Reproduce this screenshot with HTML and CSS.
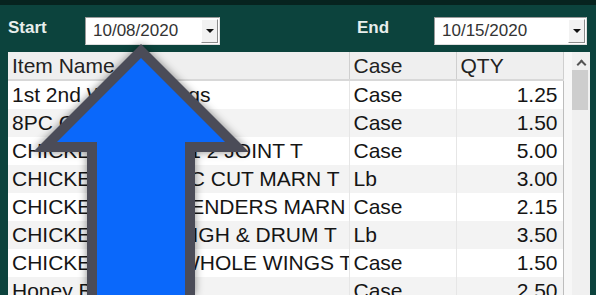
FILE: index.html
```html
<!DOCTYPE html>
<html lang="en">
  <head>
    <meta charset="UTF-8" />
    <title>Usage Report</title>
    <link rel="stylesheet" href="styles.css">
  </head>
  <body>
    <div class="topbar"></div>

    <div class="filters">
      <label class="lbl">Start</label>
      <div class="date date-start">
        <span>10/08/2020</span>
        <span class="drop"><i></i></span>
      </div>
      <label class="lbl lbl-end">End</label>
      <div class="date date-end">
        <span>10/15/2020</span>
        <span class="drop"><i></i></span>
      </div>
    </div>

    <div class="grid-wrap">
      <div class="grid-area">
        <table class="grid">
          <colgroup>
            <col class="c-name" />
            <col class="c-unit" />
            <col class="c-qty" />
          </colgroup>
          <thead>
            <tr><th>Item Name</th><th>Case</th><th>QTY</th></tr>
          </thead>
          <tbody>
            <tr><td>1st 2nd Whole Wings</td><td>Case</td><td class="num">1.25</td></tr>
            <tr><td>8PC Chicken</td><td>Case</td><td class="num">1.50</td></tr>
            <tr><td>CHICKEN WINGS 1 2 JOINT T</td><td>Case</td><td class="num">5.00</td></tr>
            <tr><td>CHICKEN WHL 8PC CUT MARN T</td><td>Lb</td><td class="num">3.00</td></tr>
            <tr><td>CHICKEN BRST. TENDERS MARN</td><td>Case</td><td class="num">2.15</td></tr>
            <tr><td>CHICKEN 8 PC THIGH &amp; DRUM T</td><td>Lb</td><td class="num">3.50</td></tr>
            <tr><td>CHICKEN MARN WHOLE WINGS T</td><td>Case</td><td class="num">1.50</td></tr>
            <tr><td>Honey Butter</td><td>Case</td><td class="num">2.50</td></tr>
          </tbody>
        </table>
      </div>
      <div class="scrollbar">
        <span class="up"></span>
        <span class="thumb"></span>
      </div>
    </div>

    <svg class="pointer" width="596" height="295" viewBox="0 0 596 295">
      <polygon fill="#4b4c58" points="141,44 249,152 195,152 195,300 87,300 87,152 33,152" />
      <polygon fill="#0a68fb" points="141,58 225,142 185,142 185,300 97,300 97,142 57,142" />
    </svg>
  </body>
</html>
```

FILE: styles.css
```css
body {
  margin: 0;
  background-color: #0c433d;
  font-family: "Liberation Sans", Arial, sans-serif;
  overflow: hidden;
}
.topbar {
  height: 5px;
  background-color: #07231f;
}
.filters {
  display: flex;
  align-items: center;
  padding: 12px 0 0 8px;
  height: 28px;
}
.lbl {
  width: 77px;
  color: #e8eeec;
  font-weight: bold;
  font-size: 17px;
  margin-top: -6px;
}
.lbl-end {
  margin-left: 137px;
}
.date {
  box-sizing: border-box;
  height: 28px;
  background: white;
  border: 1px solid #9a9a9a;
  border-right-color: #e0e0e0;
  border-bottom-color: #e0e0e0;
  display: flex;
  align-items: center;
  justify-content: space-between;
  padding: 0 1px 0 7px;
  font-size: 17px;
  color: #333;
}
.date-start {
  width: 135px;
}
.date-end {
  width: 153px;
}
.drop {
  width: 17px;
  height: 24px;
  box-sizing: border-box;
  background: #f2f2f2;
  border: 1px solid #fff;
  border-right-color: #8c8c8c;
  border-bottom-color: #8c8c8c;
  display: flex;
  align-items: center;
  justify-content: center;
}
.drop i {
  width: 0;
  height: 0;
  border-left: 4px solid transparent;
  border-right: 4px solid transparent;
  border-top: 4px solid #111;
}
.grid-wrap {
  display: flex;
  margin: 7px 6px 0 8px;
  height: 260px;
}
.grid-area {
  width: 564px;
  background: #f7f7f7;
  overflow: hidden;
}
.grid {
  border-collapse: collapse;
  table-layout: fixed;
  width: 555px;
  font-size: 21px;
  color: #151515;
}
.c-name {
  width: 341px;
}
.c-unit,
.c-qty {
  width: 107px;
}
.grid th {
  height: 27px;
  padding: 0 4px;
  background: #efefef;
  font-weight: normal;
  text-align: left;
  color: #222;
  border-right: 1px solid #cfcfcf;
  border-bottom: 2px solid #d8d8d8;
  white-space: nowrap;
  overflow: hidden;
}
.grid td {
  height: 28px;
  padding: 0 4px;
  white-space: nowrap;
  overflow: hidden;
  border-right: 1px solid #e6e6e6;
  background: white;
}
.grid tbody tr:nth-child(even) td {
  background: #f3f3f3;
}
.grid td.num {
  text-align: right;
  padding-right: 5px;
  border-right: 1px solid #bdbdbd;
}
.scrollbar {
  position: relative;
  width: 18px;
  background: #f0f0f0;
}
.up {
  position: absolute;
  left: 6px;
  top: 9px;
  width: 5px;
  height: 5px;
  border-left: 2px solid #555;
  border-top: 2px solid #555;
  transform: rotate(45deg);
}
.thumb {
  position: absolute;
  left: 0;
  right: 2px;
  top: 18px;
  height: 40px;
  background: #cdcdcd;
}
.pointer {
  position: absolute;
  left: 0;
  top: 0;
  pointer-events: none;
  filter: drop-shadow(0 0 4px rgba(0, 0, 0, 0.45));
}
```
